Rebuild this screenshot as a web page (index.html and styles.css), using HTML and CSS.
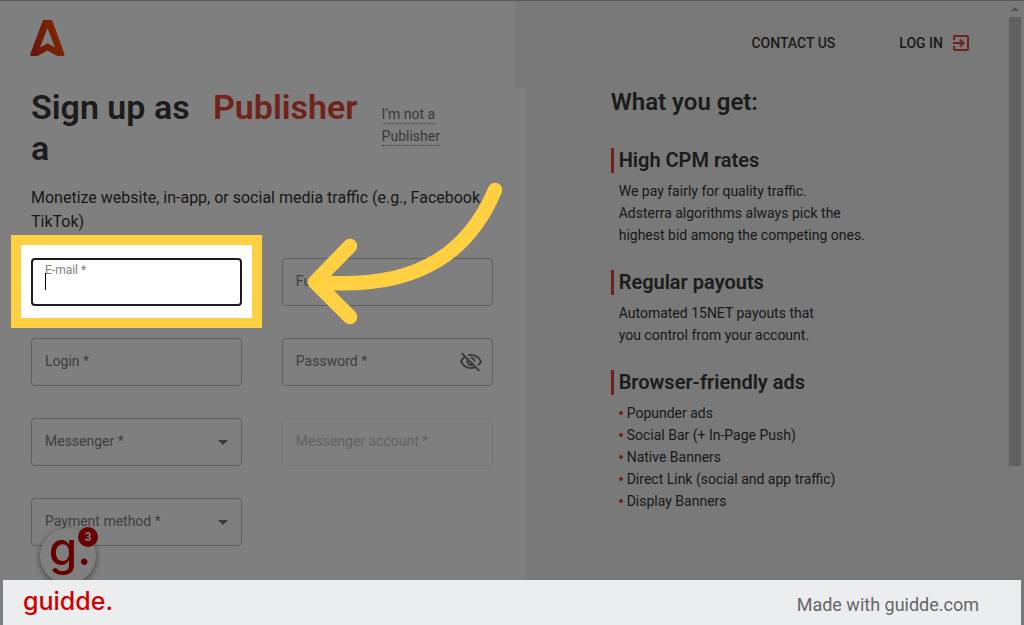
FILE: index.html
```html
<!DOCTYPE html>
<html lang="en">
<head>
    <meta charset="UTF-8">
    <meta name="viewport" content="width=device-width, initial-scale=1.0">
    <title>Sign up as a Publisher</title>
    <link rel="stylesheet" href="styles.css">
</head>
<body>
    <div class="window">
        <div class="page">
            <header class="header">
                <a href="#" class="brand" aria-label="Adsterra">
                    <svg width="35" height="36" viewBox="0 0 35 36">
                        <defs>
                            <linearGradient id="logoFill" x1="0" y1="1" x2="1" y2="0.6">
                                <stop offset="0" stop-color="#c8281e"/>
                                <stop offset="1" stop-color="#ff5000"/>
                            </linearGradient>
                        </defs>
                        <path fill="url(#logoFill)" fill-rule="evenodd" d="M14 0h7q1 0 1.400 1L34.500 34q.5 2-1.500 2h-4q-1.500 0-2.500-.6L17.500 30.500 8.500 35.400Q7.500 36 6 36H2Q-.3 36 .3 34L12.600 1q.4-1 1.400-1zM17.500 8L10 27.500l7.500-4.200 7.500 4.200z"/>
                    </svg>
                </a>
                <nav class="nav">
                    <a href="#">CONTACT US</a>
                    <a href="#" class="login-link">
                        LOG IN
                        <svg width="16" height="16" viewBox="0 0 16 16" fill="none" stroke="#e04636" stroke-width="2">
                            <path d="M1 5V2q0-1 1-1h12q1 0 1 1v12q0 1-1 1H2q-1 0-1-1v-3M0 8h10M7 4.500L10.500 8 7 11.500"/>
                        </svg>
                    </a>
                </nav>
            </header>

            <main class="content">
                <section class="signup">
                    <div class="title-row">
                        <h1 class="title">Sign up as a</h1>
                        <span class="role">Publisher</span>
                        <div class="switch"><a href="#">I’m not a Publisher</a></div>
                    </div>
                    <p class="intro">Monetize website, in-app, or social media traffic (e.g., Facebook, TikTok)</p>

                    <form class="form">
                        <div class="field active">
                            <input type="email" id="email">
                            <label for="email">E-mail *</label>
                            <span class="caret"></span>
                            <div class="spotlight"></div>
                            <svg class="arrow" width="200" height="148" viewBox="304 180 200 148" fill="none" stroke="#ffd042" stroke-width="14.500" stroke-linecap="round" stroke-linejoin="round">
                                <path d="M495 190C472 245 425 292 315 282M350 246L315 282L350 317"/>
                            </svg>
                        </div>
                        <div class="field">
                            <input type="text" id="fullName">
                            <label for="fullName">Full name *</label>
                        </div>
                        <div class="field">
                            <input type="text" id="login">
                            <label for="login">Login *</label>
                        </div>
                        <div class="field">
                            <input type="password" id="password">
                            <label for="password">Password *</label>
                            <button type="button" class="toggle" aria-label="Show password">
                                <svg width="24" height="24" viewBox="0 0 24 24" fill="#757575">
                                    <path d="M12 6c3.790 0 7.170 2.130 8.820 5.500-.59 1.220-1.420 2.270-2.410 3.120l1.410 1.410c1.390-1.230 2.490-2.770 3.180-4.530C21.270 7.110 17 4 12 4c-1.270 0-2.490.2-3.640.57l1.650 1.650C10.660 6.090 11.320 6 12 6zm-1.070 1.140L13 9.210c.57.25 1.030.71 1.280 1.280l2.070 2.070c.08-.34.14-.7.14-1.070C16.500 9.010 14.480 7 12 7c-.37 0-.72.05-1.070.14zM2.010 3.870l2.680 2.680C3.060 7.830 1.770 9.530 1 11.500 2.730 15.890 7 19 12 19c1.520 0 2.980-.29 4.320-.82l3.420 3.420 1.410-1.410L3.420 2.450 2.010 3.870zm7.500 7.500l2.610 2.610c-.04.01-.08.02-.12.02-1.380 0-2.500-1.120-2.500-2.500 0-.05.01-.08.01-.13zm-3.400-3.400l1.750 1.750c-.23.55-.36 1.150-.36 1.780 0 2.480 2.020 4.500 4.500 4.500.63 0 1.230-.13 1.770-.36l.98.98c-.88.24-1.800.38-2.750.38-3.790 0-7.170-2.130-8.820-5.500.7-1.430 1.720-2.610 2.930-3.530z"/>
                                </svg>
                            </button>
                        </div>
                        <div class="field select">
                            <select id="messenger"><option></option></select>
                            <label for="messenger">Messenger *</label>
                        </div>
                        <div class="field disabled">
                            <input type="text" id="account" disabled>
                            <label for="account">Messenger account *</label>
                        </div>
                        <div class="field select">
                            <select id="payment"><option></option></select>
                            <label for="payment">Payment method *</label>
                        </div>
                    </form>
                </section>

                <aside class="benefits">
                    <h2>What you get:</h2>
                    <div class="benefit">
                        <h3>High CPM rates</h3>
                        <p>We pay fairly for quality traffic.<br>Adsterra algorithms always pick the<br>highest bid among the competing ones.</p>
                    </div>
                    <div class="benefit">
                        <h3>Regular payouts</h3>
                        <p>Automated 15NET payouts that<br>you control from your account.</p>
                    </div>
                    <div class="benefit">
                        <h3>Browser-friendly ads</h3>
                        <ul>
                            <li>Popunder ads</li>
                            <li>Social Bar (+ In-Page Push)</li>
                            <li>Native Banners</li>
                            <li>Direct Link (social and app traffic)</li>
                            <li>Display Banners</li>
                        </ul>
                    </div>
                </aside>
            </main>
        </div>
        <div class="scrollbar">
            <div class="scroll-up"></div>
            <div class="scroll-thumb"></div>
        </div>
    </div>

    <button class="widget" aria-label="Open guides">
        <span class="widget-logo">g.</span>
        <span class="badge">3</span>
    </button>

    <footer class="footer">
        <span class="guidde">guidde.</span>
        <span class="made">Made with guidde.com</span>
    </footer>
</body>
</html>
```

FILE: styles.css
```css
* {
    box-sizing: border-box;
}
body {
    margin: 0;
    font-family: Roboto, Arial, sans-serif;
    font-size: 14px;
    line-height: 22px;
    color: #333;
    background: #f2f2f2;
    overflow: hidden;
}
h1, h2, h3, p, ul {
    margin: 0;
    padding: 0;
}
.window {
    display: grid;
    grid-template-columns: 1fr 15px;
    height: 100vh;
    border-top: 1px solid #b4b4b4;
}
.page {
    display: flex;
    flex-direction: column;
}

/* header */
.header {
    display: flex;
}
.brand {
    display: flex;
    flex: 0 0 51%;
    align-items: center;
    height: 87px;
    padding: 0 30px 14px;
    background: white;
}
.nav {
    display: flex;
    flex: 1;
    align-items: flex-start;
    justify-content: flex-end;
    gap: 64px;
    padding: 31px 40px 0;
}
.nav a {
    color: #383838;
    font-weight: 500;
    text-decoration: none;
}
.nav .login-link {
    display: flex;
    align-items: center;
    gap: 10px;
}

/* sign up form */
.content {
    display: flex;
    flex: 1;
}
.signup {
    flex: 0 0 52%;
    padding: 0 32px 0 31px;
    background: white;
}
.title-row {
    display: flex;
    margin-top: -1px;
    font-size: 34px;
    font-weight: 600;
    line-height: 41px;
}
.title {
    width: 182px;
    font-size: 34px;
    font-weight: 600;
    color: #383838;
}
.role {
    margin-right: 24px;
    color: #e04636;
}
.switch {
    flex: 1;
    max-width: 80px;
    padding-top: 16px;
    font-size: 14px;
    font-weight: 400;
    line-height: 22px;
}
.switch a {
    padding-bottom: 1px;
    color: #757575;
    text-decoration: none;
    border-bottom: 1px dotted #757575;
}
.intro {
    margin: 17px 0 24px;
    font-size: 16px;
    line-height: 24px;
}
.form {
    display: grid;
    grid-template-columns: 1fr 1fr;
    gap: 32px 40px;
}
.field {
    position: relative;
    height: 48px;
}
.field input,
.field select {
    display: block;
    width: 100%;
    height: 100%;
    padding: 0 14px;
    font: inherit;
    background: transparent;
    border: 1px solid #bdbdbd;
    border-radius: 4px;
    outline: none;
    appearance: none;
}
.field label {
    position: absolute;
    top: 12px;
    left: 14px;
    color: #808080;
    pointer-events: none;
}
.field.active input {
    border: 2px solid #1d1b1f;
}
.field.active label {
    top: 1px;
    font-size: 12px;
}
.field.disabled input {
    border-color: #e4e4e4;
}
.field.disabled label {
    color: #c4c4c4;
}
.field.select::after {
    content: "";
    position: absolute;
    top: 22px;
    right: 14px;
    border: 5px solid transparent;
    border-top-color: #757575;
    border-bottom: 0;
}
.caret {
    position: absolute;
    top: 15px;
    left: 14px;
    width: 1px;
    height: 17px;
    background: black;
}
.toggle {
    position: absolute;
    top: 12px;
    right: 10px;
    display: flex;
    padding: 0;
    border: none;
    background: none;
}

/* highlight over the active field, dims the rest of the page */
.spotlight {
    position: absolute;
    inset: -23px -20px -22px;
    z-index: 10;
    border: 10px solid #ffd042;
    box-shadow: 0 0 0 2000px rgba(0,0,0,0.5);
    pointer-events: none;
}
.arrow {
    position: absolute;
    top: -78px;
    left: 273px;
    z-index: 11;
    pointer-events: none;
}

/* benefits */
.benefits {
    flex: 1;
    padding-left: 86px;
}
.benefits h2 {
    margin-bottom: 32px;
    font-size: 24px;
    font-weight: 600;
    line-height: 28px;
    color: #383838;
}
.benefit {
    margin-bottom: 24px;
}
.benefit h3 {
    margin-bottom: 7px;
    padding-left: 5px;
    font-size: 20px;
    font-weight: 600;
    line-height: 25px;
    color: #383838;
    border-left: 3px solid #e04636;
}
.benefit p,
.benefit ul {
    padding-left: 8px;
}
.benefit li {
    display: flex;
    align-items: center;
    gap: 4px;
}
.benefit li::before {
    content: "";
    width: 4px;
    height: 4px;
    border-radius: 50%;
    background: #e04636;
}

/* scrollbar */
.scrollbar {
    display: flex;
    flex-direction: column;
    align-items: center;
    padding-right: 3px;
}
.scroll-up {
    margin: 6px 0 6px;
    border: 4px solid transparent;
    border-top: 0;
    border-bottom-color: #a0a0a0;
}
.scroll-thumb {
    width: 100%;
    height: 72%;
    background: #c1c1c1;
}

/* help widget */
.widget {
    position: fixed;
    bottom: 41px;
    left: 40px;
    z-index: 5;
    display: flex;
    align-items: flex-start;
    justify-content: center;
    width: 56px;
    height: 56px;
    padding: 0;
    border: none;
    border-radius: 50%;
    background: white;
    box-shadow: 0 2px 6px rgba(0,0,0,0.5);
    color: #d00000;
}
.widget-logo {
    padding-left: 4px;
    font: 500 46px/40px Inter, sans-serif;
}
.badge {
    position: absolute;
    top: -1px;
    right: -2px;
    width: 20px;
    height: 20px;
    border-radius: 50%;
    background: #d00000;
    color: white;
    font-size: 12px;
    font-weight: 700;
    line-height: 20px;
}

/* footer */
.footer {
    position: fixed;
    right: 3px;
    bottom: 0;
    left: 3px;
    z-index: 20;
    display: flex;
    align-items: center;
    justify-content: space-between;
    height: 45px;
    padding: 0 42px 0 20px;
    background: #ecedef;
}
.guidde {
    padding-bottom: 4px;
    font: 500 25px/32px Inter, sans-serif;
    color: #d00000;
}
.made {
    padding-top: 4px;
    font-size: 18px;
    color: #666;
}
```
